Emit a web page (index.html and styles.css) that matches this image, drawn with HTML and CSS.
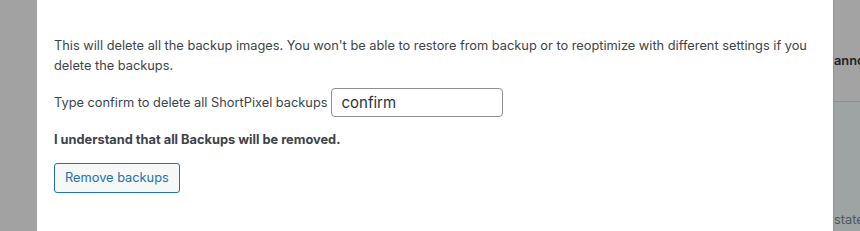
FILE: index.html
```html
<!DOCTYPE html>
<html lang="en">
<head>
    <meta charset="UTF-8">
    <meta name="viewport" content="width=device-width, initial-scale=1.0">
    <link rel="stylesheet" href="styles.css">
    <title>Remove backups</title>
</head>
<body>
    <div class="pagina">
        <div class="fondoIzq"></div>

        <!-- Ventana modal -->
        <div class="modal">
            <p>This will delete all the backup images. You won't be able to restore from backup or to reoptimize with different settings if you delete the backups.</p>
            <p class="filaConfirm">
                <label for="confirmInput">Type confirm to delete all ShortPixel backups</label>
                <input type="text" id="confirmInput" class="confirmInput" value="confirm">
            </p>
            <p class="aviso">I understand that all Backups will be removed.</p>
            <button type="button" class="botonRemove">Remove backups</button>
        </div>

        <div class="fondoDer">
            <div class="fondoDerArriba"><span class="textoAnno">anno</span></div>
            <div class="fondoDerAbajo"><span class="textoState">state</span></div>
        </div>
    </div>
</body>
</html>
```

FILE: styles.css
```css
body {
    margin: 0;
    font-family: Inter, "Noto Sans", sans-serif;
    font-size: 12.8px;
    line-height: 19.5px;
    color: #3c434a;
}

.pagina {
    display: flex;
    height: 231px;
    overflow: hidden;
}

.fondoIzq {
    width: 37px;
    flex-shrink: 0;
    background-color: #a2a2a2;
}

.modal {
    width: 779px;
    flex-shrink: 0;
    background-color: #fff;
    padding: 36px 0 0 17px;
}

.modal p {
    margin: 0 0 13px 0;
}

.filaConfirm {
    display: flex;
    align-items: center;
    gap: 4px;
}

.confirmInput {
    width: 172px;
    height: 29px;
    box-sizing: border-box;
    border: 1px solid #8c8f94;
    border-radius: 4px;
    padding: 0 9px;
    font-family: inherit;
    font-size: 15px;
    color: #2c3338;
}

.aviso {
    font-weight: 700;
}

.botonRemove {
    height: 30px;
    padding: 0 10px;
    background-color: #f6f7f7;
    border: 1px solid #2271b1;
    border-radius: 3px;
    color: #2271b1;
    font-family: inherit;
    font-size: 12.8px;
    cursor: pointer;
}

.fondoDer {
    flex: 1;
    display: flex;
    flex-direction: column;
    border-left: 1px solid #939393;
    white-space: nowrap;
    overflow: hidden;
}

.fondoDerArriba {
    height: 102px;
    background-color: #a3a3a3;
    border-bottom: 1px solid #8f8f8f;
    box-sizing: border-box;
    padding-top: 51px;
}

.fondoDerAbajo {
    flex: 1;
    background-color: #9ea3a3;
    padding-top: 108px;
}

.textoAnno {
    font-weight: 600;
    color: #1d2327;
}

.textoState {
    color: #50575e;
}
```
